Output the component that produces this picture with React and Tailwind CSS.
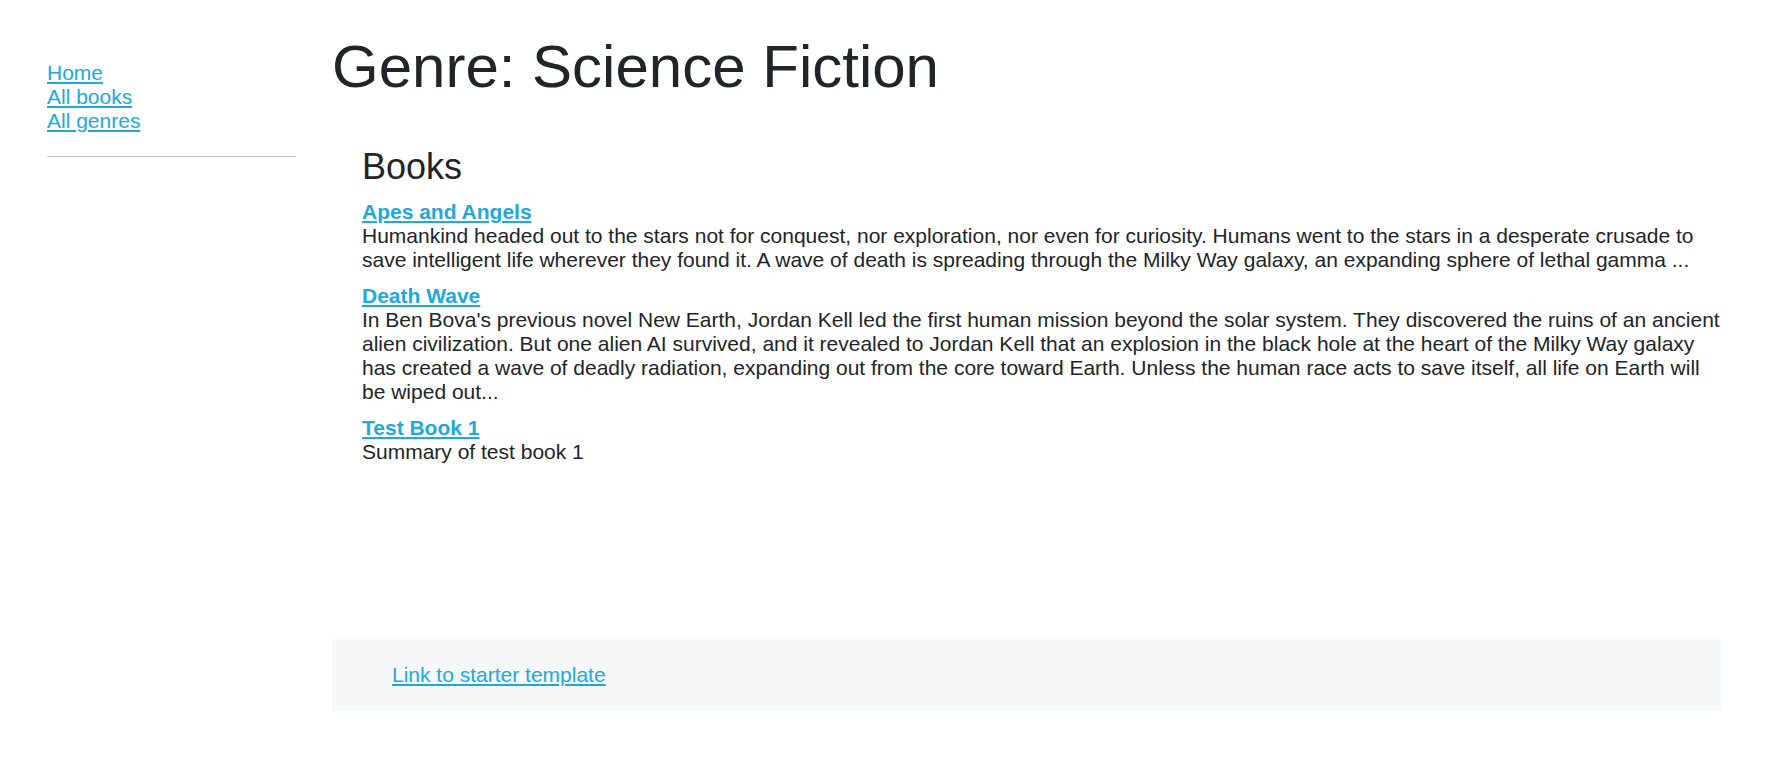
import React from 'react';

const books = [
  {
    title: 'Apes and Angels',
    summary:
      'Humankind headed out to the stars not for conquest, nor exploration, nor even for curiosity. Humans went to the stars in a desperate crusade to save intelligent life wherever they found it. A wave of death is spreading through the Milky Way galaxy, an expanding sphere of lethal gamma ...',
  },
  {
    title: 'Death Wave',
    summary:
      "In Ben Bova's previous novel New Earth, Jordan Kell led the first human mission beyond the solar system. They discovered the ruins of an ancient alien civilization. But one alien AI survived, and it revealed to Jordan Kell that an explosion in the black hole at the heart of the Milky Way galaxy has created a wave of deadly radiation, expanding out from the core toward Earth. Unless the human race acts to save itself, all life on Earth will be wiped out...",
  },
  {
    title: 'Test Book 1',
    summary: 'Summary of test book 1',
  },
];

const App = () => {
  return (
    <div className="flex min-h-screen bg-white text-[#212529] font-['Liberation_Sans',Arial,sans-serif] text-[21px] leading-[24px]">
      {/* Sidebar */}
      <div className="w-[332px] shrink-0 pl-[47px] pt-[61px]">
        <ul className="w-[249px]">
          <li><a href="#" className="text-[#20a9de] underline">Home</a></li>
          <li><a href="#" className="text-[#20a9de] underline">All books</a></li>
          <li><a href="#" className="text-[#20a9de] underline">All genres</a></li>
        </ul>
        <hr className="w-[249px] mt-[23px] border-0 border-t border-[#c4c4c4]" />
      </div>

      {/* Main */}
      <div className="w-[1389px] shrink-0 pt-[31px]">
        <h1 className="text-[60px] leading-[72px] font-normal">Genre: Science Fiction</h1>

        <div className="pl-[30px] mr-[-4px] mt-[42px]">
          <h3 className="text-[36px] leading-[43px] font-normal mb-[12px]">Books</h3>
          <dl>
            {books.map((book) => (
              <div key={book.title} className="mb-[12px]">
                <dt>
                  <a href="#" className="font-bold text-[#20a9de] underline">{book.title}</a>
                </dt>
                <dd>{book.summary}</dd>
              </div>
            ))}
          </dl>
        </div>

        <div className="mt-[175px] bg-[#f7f8f9] py-6 pl-[60px]">
          <a href="#" className="text-[#20a9de] underline">Link to starter template</a>
        </div>
      </div>
    </div>
  );
};

export default App;
